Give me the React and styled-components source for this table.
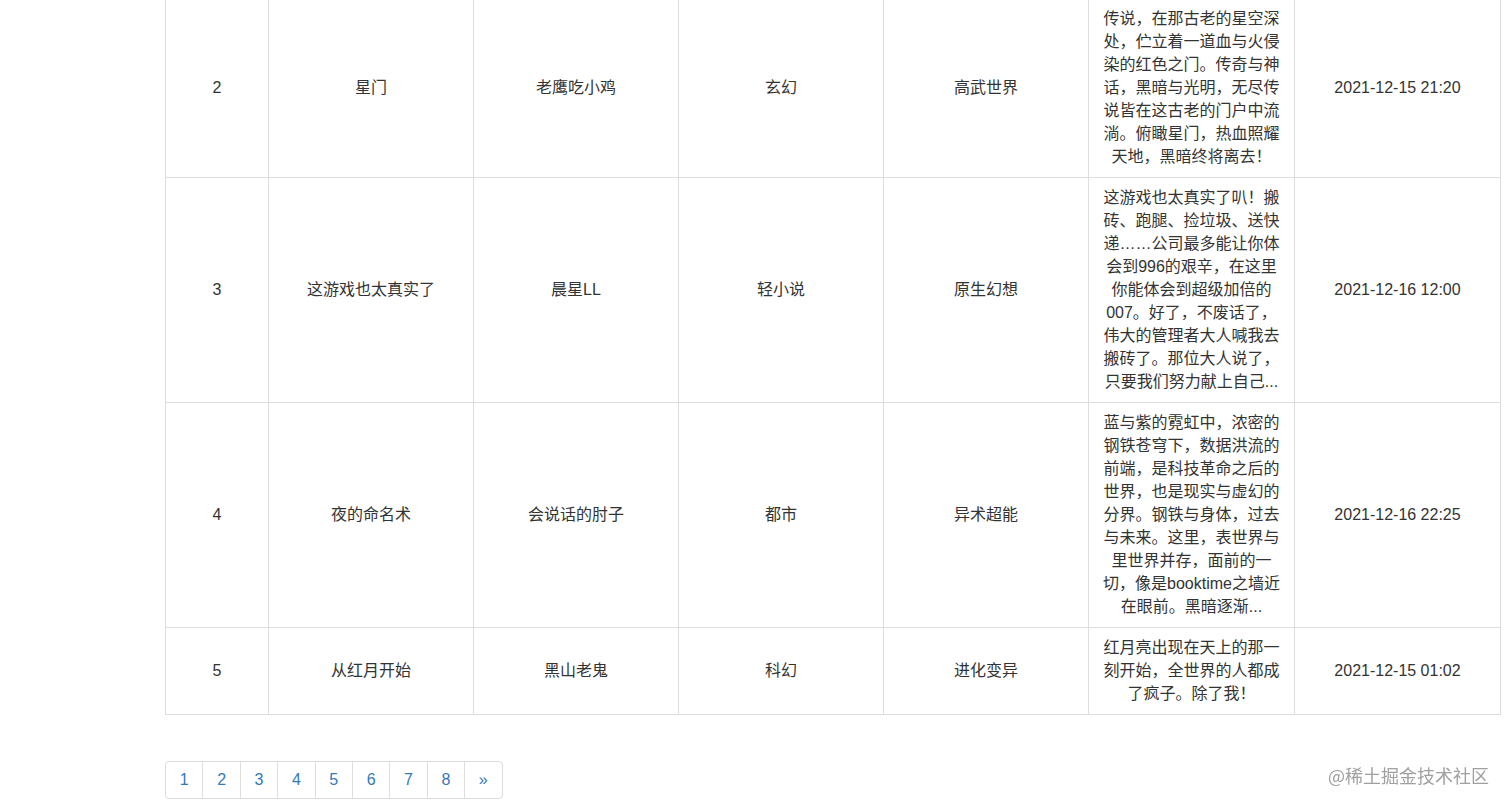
import React from "react";
import styled, { createGlobalStyle } from "styled-components";

const GlobalStyle = createGlobalStyle`
  html, body {
    margin: 0;
    padding: 0;
    background: #fff;
  }
  body {
    font-family: "Liberation Sans", Arial, "Noto Sans CJK SC", sans-serif;
    font-size: 16px;
    line-height: 23px;
    color: #333;
  }
`;

const books = [
  {
    id: 2,
    name: "星门",
    author: "老鹰吃小鸡",
    category: "玄幻",
    sub: "高武世界",
    intro:
      "传说，在那古老的星空深处，伫立着一道血与火侵染的红色之门。传奇与神话，黑暗与光明，无尽传说皆在这古老的门户中流淌。俯瞰星门，热血照耀天地，黑暗终将离去！",
    time: "2021-12-15 21:20",
  },
  {
    id: 3,
    name: "这游戏也太真实了",
    author: "晨星LL",
    category: "轻小说",
    sub: "原生幻想",
    intro:
      "这游戏也太真实了叭！搬砖、跑腿、捡垃圾、送快递……公司最多能让你体会到996的艰辛，在这里你能体会到超级加倍的007。好了，不废话了，伟大的管理者大人喊我去搬砖了。那位大人说了，只要我们努力献上自己...",
    time: "2021-12-16 12:00",
  },
  {
    id: 4,
    name: "夜的命名术",
    author: "会说话的肘子",
    category: "都市",
    sub: "异术超能",
    intro:
      "蓝与紫的霓虹中，浓密的钢铁苍穹下，数据洪流的前端，是科技革命之后的世界，也是现实与虚幻的分界。钢铁与身体，过去与未来。这里，表世界与里世界并存，面前的一切，像是booktime之墙近在眼前。黑暗逐渐...",
    time: "2021-12-16 22:25",
  },
  {
    id: 5,
    name: "从红月开始",
    author: "黑山老鬼",
    category: "科幻",
    sub: "进化变异",
    intro: "红月亮出现在天上的那一刻开始，全世界的人都成了疯子。除了我！",
    time: "2021-12-15 01:02",
  },
];

const colWidths = [103, 205, 205, 205, 205, 206, 206];

const Page = styled.div`
  padding-left: 165px;
  padding-bottom: 8px;
`;

const Table = styled.table`
  width: 1335px;
  table-layout: fixed;
  border-collapse: collapse;
  border-spacing: 0;
  margin-top: -2px;
  margin-bottom: 0;
`;

const Cell = styled.td`
  border: 1px solid #ddd;
  padding: 8px 10px 9px;
  text-align: center;
  vertical-align: middle;
  word-break: normal;
  line-break: strict;
`;

const Pager = styled.ul`
  display: flex;
  list-style: none;
  margin: 46px 0 0;
  padding: 0;
`;

const PageLink = styled.a`
  display: block;
  width: 38.4px;
  box-sizing: border-box;
  text-align: center;
  padding: 6px 0 7px;
  margin-left: ${(p) => (p.$first ? "0" : "-1px")};
  border: 1px solid #ddd;
  background: #fff;
  color: #337ab7;
  text-decoration: none;
  line-height: 23px;
  border-radius: ${(p) =>
    p.$first ? "4px 0 0 4px" : p.$last ? "0 4px 4px 0" : "0"};
`;

const Watermark = styled.div`
  position: fixed;
  right: 23px;
  bottom: 22px;
  font-family: "Noto Sans CJK SC", sans-serif;
  font-size: 18px;
  line-height: 20px;
  color: #a0a0a0;
`;

export default function App() {
  const pages = ["1", "2", "3", "4", "5", "6", "7", "8", "»"];
  return (
    <>
      <GlobalStyle />
      <Page>
        <Table>
          <colgroup>
            {colWidths.map((w, i) => (
              <col key={i} style={{ width: w }} />
            ))}
          </colgroup>
          <tbody>
            {books.map((b) => (
              <tr key={b.id}>
                <Cell>{b.id}</Cell>
                <Cell>{b.name}</Cell>
                <Cell>{b.author}</Cell>
                <Cell>{b.category}</Cell>
                <Cell>{b.sub}</Cell>
                <Cell>{b.intro}</Cell>
                <Cell>{b.time}</Cell>
              </tr>
            ))}
          </tbody>
        </Table>
        <Pager>
          {pages.map((p, i) => (
            <li key={p}>
              <PageLink
                href="#"
                $first={i === 0}
                $last={i === pages.length - 1}
              >
                {p}
              </PageLink>
            </li>
          ))}
        </Pager>
      </Page>
      <Watermark>@稀土掘金技术社区</Watermark>
    </>
  );
}
